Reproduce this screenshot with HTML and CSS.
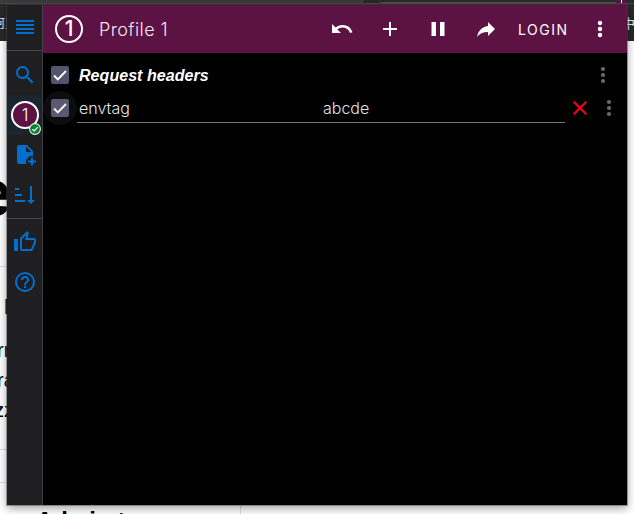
FILE: index.html
```html
<!DOCTYPE html>
<html lang="en">
<head>
<meta charset="utf-8">
<title>Profile 1</title>
<link rel="stylesheet" href="styles.css">
</head>
<body>
<div class="backdrop">
  <div class="tabs"><span class="tab"></span><span class="address"></span><span class="ext"></span></div>
  <div class="bookmarks"><span class="bm-left">阿里</span><span class="bm-right">中文</span></div>
  <div class="hero">e</div>
  <div class="article">
    <h3>N</h3>
    <p>rr</p><p>ra</p><p class="tight">zz</p>
  </div>
  <div class="band"></div>
  <div class="foot"><h2>Admin t</h2></div>
</div>

<div class="popup">
  <nav class="rail">
    <div class="menu"><svg width="18" height="14" viewBox="0 0 18 14"><path d="M0 1h18M0 5h18M0 9h18M0 13h18" stroke="#0070d0" stroke-width="2"/></svg></div>
    <div class="item search"><svg width="24" height="24" viewBox="0 0 24 24"><path fill="#0070d0" d="M15.5 14h-.79l-.28-.27A6.47 6.47 0 0 0 16 9.500 6.500 6.500 0 1 0 9.500 16c1.610 0 3.090-.59 4.230-1.570l.27.28v.79l5 4.990L20.490 19zM9.500 14a4.500 4.500 0 1 1 0-9 4.500 4.500 0 0 1 0 9z"/></svg></div>
    <div class="item selected"><span class="avatar">1</span><svg class="ok" width="12" height="12" viewBox="0 0 12 12"><circle cx="6" cy="6" r="5.400" fill="#08822e" stroke="#e8f3ed" stroke-width="1.100"/><path d="M3.400 6.200l1.900 1.800 3.400-3.800" fill="none" stroke="#fff" stroke-width="1.200"/></svg></div>
    <div class="item"><svg width="24" height="24" viewBox="0 0 24 24"><path fill="#0070d0" d="M6 2h8l6 6v5.100a6 6 0 0 0-7 5.900c0 .7.100 1.400.4 2H6a2 2 0 0 1-2-2V4c0-1.100.9-2 2-2zm7 1.500V9h5.500zM18 14.500h2v3h3v2h-3v3h-2v-3h-3v-2h3z"/></svg></div>
    <div class="item"><svg width="24" height="24" viewBox="0 0 24 24"><path fill="#0070d0" d="M19 17h3l-4 4-4-4h3V3h2zM2 17h10v2H2zM6 5v2H2V5zM2 11h7v2H2z"/></svg></div>
    <div class="split"></div>
    <div class="item like"><svg width="24" height="24" viewBox="0 0 24 24"><path fill="#0070d0" d="M5 9v12H1V9zm4 12a2 2 0 0 1-2-2V9c0-.55.22-1.050.59-1.410L14.170 1l1.060 1.060c.27.27.44.64.44 1.050l-.03.32L14.690 8H21a2 2 0 0 1 2 2v2c0 .26-.05.5-.14.730l-3.020 7.050C19.540 20.500 18.830 21 18 21zm0-2h9.030L21 12v-2h-8.790l1.130-5.320L9 9.030z"/></svg></div>
    <div class="item"><svg width="24" height="24" viewBox="0 0 24 24"><path fill="#0070d0" d="M11 18h2v-2h-2zm1-16a10 10 0 1 0 0 20 10 10 0 0 0 0-20zm0 18a8 8 0 1 1 0-16 8 8 0 0 1 0 16zm0-14a4 4 0 0 0-4 4h2a2 2 0 1 1 4 0c0 2-3 1.750-3 5h2c0-2.250 3-2.500 3-5a4 4 0 0 0-4-4z"/></svg></div>
  </nav>
  <main>
    <header>
      <span class="badge">1</span>
      <span class="title">Profile 1</span>
      <div class="actions">
        <svg width="24" height="24" viewBox="0 0 24 24"><path fill="#fff" d="M12.500 8c-2.650 0-5.050.99-6.900 2.600L2 7v9h9l-3.620-3.620A8 8 0 0 1 20.080 16l2.370-.78A10.500 10.500 0 0 0 12.500 8z"/></svg>
        <svg width="24" height="24" viewBox="0 0 24 24"><path fill="#fff" d="M19 13h-6v6h-2v-6H5v-2h6V5h2v6h6z"/></svg>
        <svg width="24" height="24" viewBox="0 0 24 24"><path fill="#fff" d="M5.500 5H10v14H5.500zM14 5h4.500v14H14z"/></svg>
        <svg width="24" height="24" viewBox="0 0 24 24"><path fill="#fff" d="M14 5l7 7-7 7v-4.100c-5 0-8.500 1.600-11 5.100 1-5 4-10 11-11z"/></svg>
      </div>
      <span class="login">LOGIN</span>
      <svg class="more" width="6" height="18" viewBox="0 0 6 18"><g fill="#fff"><circle cx="3" cy="3" r="2.200"/><circle cx="3" cy="9" r="2.200"/><circle cx="3" cy="15" r="2.200"/></g></svg>
    </header>
    <div class="row heading">
      <span class="check"><svg width="18" height="18" viewBox="0 0 18 18"><path d="M3 9.500l3.800 3.800L15 5" fill="none" stroke="#fff" stroke-width="1.900"/></svg></span>
      <span class="label">Request headers</span>
      <svg class="dots" width="6" height="18" viewBox="0 0 6 18"><g fill="#696969"><circle cx="3" cy="3" r="2.100"/><circle cx="3" cy="9" r="2.100"/><circle cx="3" cy="15" r="2.100"/></g></svg>
    </div>
    <div class="row entry">
      <span class="check focus"><svg width="18" height="18" viewBox="0 0 18 18"><path d="M3 9.500l3.800 3.800L15 5" fill="none" stroke="#fff" stroke-width="1.900"/></svg></span>
      <div class="fields"><span>envtag</span><span>abcde</span></div>
      <svg class="remove" width="14" height="14" viewBox="0 0 14 14"><path d="M.7.7l12.600 12.600M13.300.7L.7 13.300" stroke="#ff0018" stroke-width="2"/></svg>
      <svg class="dots" width="6" height="18" viewBox="0 0 6 18"><g fill="#696969"><circle cx="3" cy="3" r="2.100"/><circle cx="3" cy="9" r="2.100"/><circle cx="3" cy="15" r="2.100"/></g></svg>
    </div>
  </main>
</div>
</body>
</html>
```
FILE: styles.css
```css
* { box-sizing: border-box; }
body { margin: 0; width: 634px; height: 514px; overflow: hidden; position: relative; background: #fff; font-family: Inter, "Liberation Sans", sans-serif; }
svg { display: block; flex: none; }
h2, h3, p { margin: 0; }

.backdrop { height: 514px; overflow: hidden; color: #000; }
.tabs { height: 4px; background: #292929; display: flex; border-bottom: 1px solid #494949; overflow: hidden; }
.tab { width: 364px; background: #3b3b3b; border-radius: 0 0 6px 0; }
.address { width: 237px; margin-left: 15px; background: #292929; border-bottom: 1px solid #555; border-radius: 0 0 0 8px; }
.ext { width: 11px; height: 3px; border: solid #5c1243; border-width: 0 5px; background: #fff; }
.bookmarks { height: 37px; background: #282828; color: #eee; display: flex; justify-content: space-between; align-items: center; font: 12px "Noto Sans CJK SC", sans-serif; white-space: nowrap; }
.bm-left { margin-left: -7px; }
.bm-right { margin-right: -14px; font-size: 13px; }
.hero { width: 300px; height: 226px; padding-top: 112px; margin-left: -25px; border-bottom: 1px solid #ddd; font: 700 66px/80px "Liberation Sans", sans-serif; }
.article { width: 300px; height: 183px; padding-top: 26px; border-bottom: 1px solid #ddd; }
.article h3 { font: 700 22px/28px "Liberation Sans", sans-serif; margin-left: 4px; margin-bottom: 14px; }
.article p { font: 20px/30px "Liberation Sans", sans-serif; margin-left: -3px; }
.article .tight { margin-left: -6px; }
.band { width: 300px; height: 33px; border-bottom: 1px solid #ddd; }
.foot { width: 241px; height: 60px; border-right: 1px solid #ddd; padding: 22px 0 0 36px; }
.foot h2 { font: 700 24px/32px "Liberation Sans", sans-serif; }

.popup { position: absolute; left: 7px; top: 5px; width: 620px; height: 500px; display: flex; background: #000; box-shadow: 0 0 0 1px rgba(70, 70, 70, .45), 0 3px 9px rgba(0, 0, 0, .4); }
.rail { width: 36px; background: #1f1f21; border-right: 1px solid #414143; }
.menu { height: 46px; padding: 15px 0 0 9px; border-bottom: 1px solid #454547; }
.item { height: 40px; display: flex; align-items: center; justify-content: center; position: relative; padding-left: 1px; }
.search { height: 44px; padding-top: 3px; }
.selected { background: #1b252d; }
.avatar { width: 28px; height: 28px; border: 2px solid #fff; border-radius: 50%; background: #5c1243; color: #fff; font-size: 17px; font-weight: 300; line-height: 24px; text-align: center; flex: none; }
.ok { position: absolute; left: 22px; top: 28px; }
.split { height: 4px; border-bottom: 1px solid #454547; }
.like { margin-top: 3px; }

main { flex: 1; color: #e5e5e5; }
header { height: 48px; background: #5c1243; display: flex; align-items: center; padding-left: 12px; color: #fff; }
.badge { width: 28px; height: 28px; border: 2px solid #fff; border-radius: 50%; font-size: 21px; font-weight: 500; line-height: 23px; text-align: center; }
.title { width: 216px; margin-left: 16px; font-size: 18px; font-weight: 300; letter-spacing: .4px; color: #f3e9f0; }
.actions { display: flex; gap: 24px; margin-left: 15px; }
.login { margin-left: 20px; width: 51px; font-size: 14px; font-weight: 400; letter-spacing: 1.500px; color: #fff; }
.more { margin-left: 28px; }
.row { display: flex; align-items: center; height: 33px; padding-left: 8px; }
.heading { height: 32px; margin-top: 6px; }
.check { width: 18px; height: 18px; border-radius: 2px; background: #55546f; flex: none; }
.focus { position: relative; }
.focus::before { content: ""; position: absolute; left: -8px; top: -8px; width: 34px; height: 34px; border-radius: 50%; background: rgba(140, 140, 170, .09); }
.label { width: 521px; margin-left: 10px; padding-top: 2px; font: italic 700 16px "Liberation Sans", sans-serif; letter-spacing: .05px; color: #fff; }
.fields { width: 488px; height: 30px; margin-left: 8px; padding: 2px 0 0 2px; border-bottom: 1px solid #777; display: grid; grid-template-columns: 244px 1fr; align-items: center; font-size: 16px; font-weight: 300; }
.remove { margin-left: 8px; }
.entry .dots { margin-left: 19px; }
```
